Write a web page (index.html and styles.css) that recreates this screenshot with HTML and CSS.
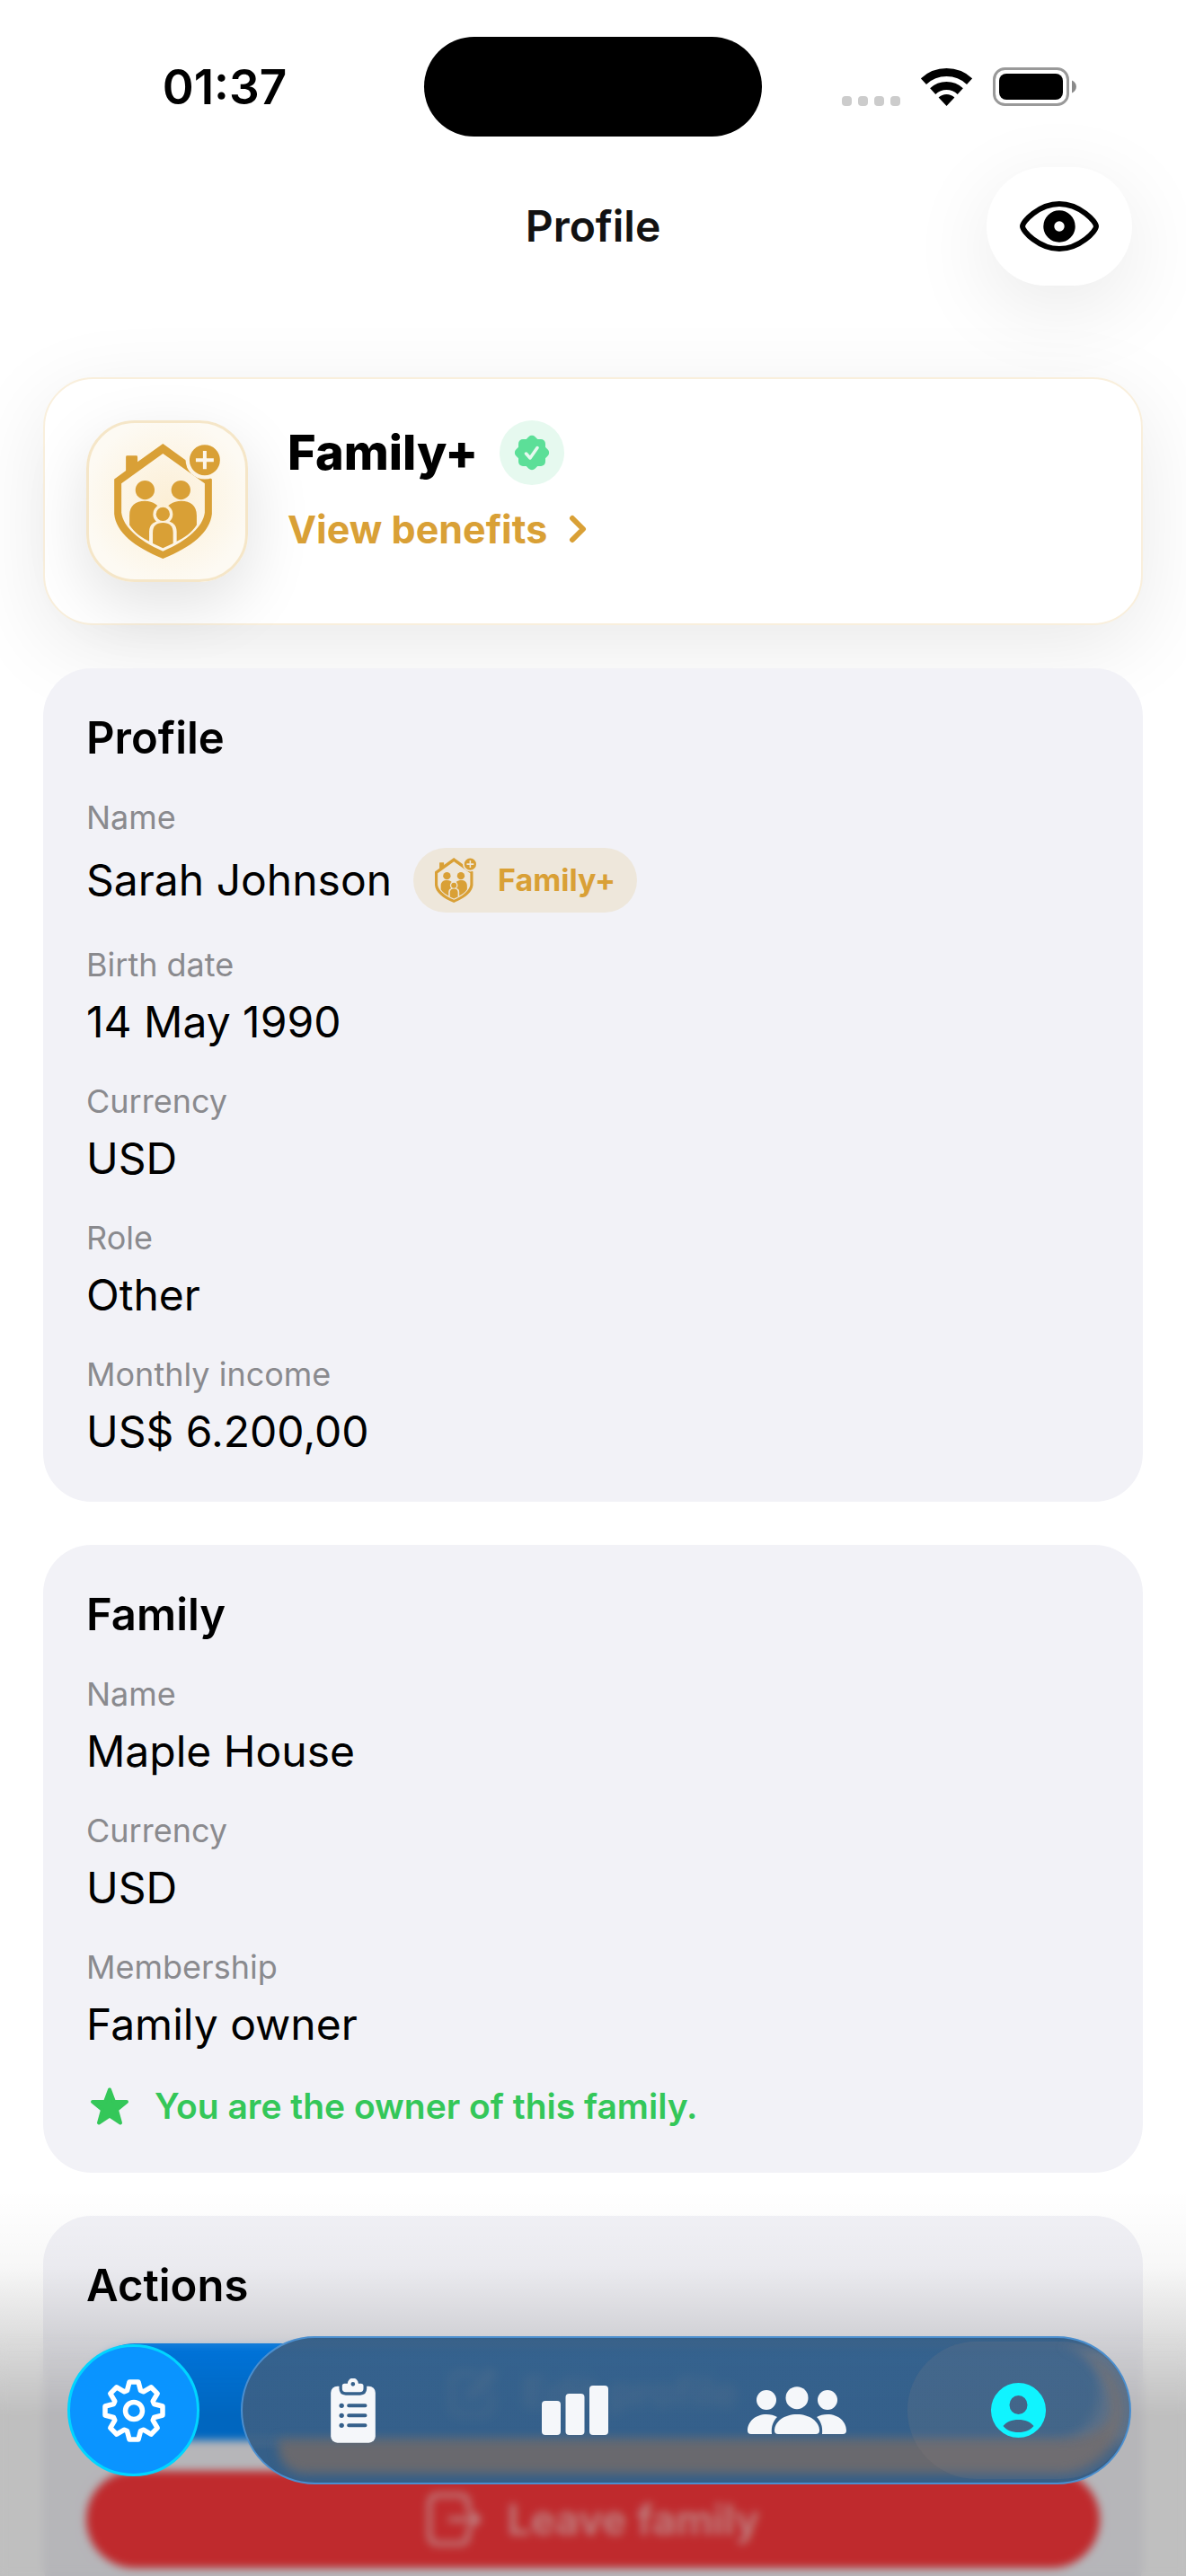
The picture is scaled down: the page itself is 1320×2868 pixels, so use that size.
FILE: index.html
```html
<!DOCTYPE html>
<html lang="en">
<head>
<meta charset="utf-8">
<meta name="viewport" content="width=device-width, initial-scale=1">
<title>Profile</title>
<link rel="stylesheet" href="styles.css">
</head>
<body>
<svg class="sprite" aria-hidden="true">
  <defs>
    <mask id="plus-gap" maskUnits="userSpaceOnUse" x="100" y="100" width="450" height="450">
      <rect x="100" y="100" width="450" height="450" fill="#fff"/>
      <circle cx="447" cy="186" r="64" fill="#000"/>
    </mask>
    <mask id="child-gap" maskUnits="userSpaceOnUse" x="100" y="100" width="450" height="450">
      <rect x="100" y="100" width="450" height="450" fill="#fff"/>
      <circle cx="307" cy="367" r="33" fill="#000"/>
      <path d="M261 520V425C261 400 280 388 307 388S353 400 353 425V520Z" fill="#000"/>
    </mask>
    <symbol id="family-plus" viewBox="144 131 354 385">
      <g fill="currentColor">
        <path mask="url(#plus-gap)" fill-rule="evenodd" d="M307 131L471 250V366C464 428 404 476 307 516C211 476 150 428 144 366V250L183 221V175Q183 171 187 171H218Q222 171 222 175V192ZM307 164L168 264V362C174 408 222 454 307 491C393 454 441 408 447 362V264Z"/>
        <g mask="url(#child-gap)">
          <path d="M195 403V372C195 338 216 323 246 323C276 323 292 338 307 362C322 338 338 323 369 323C399 323 420 338 420 372V403C404 428 380 446 345 462H270C235 446 211 428 195 403Z"/>
        </g>
        <circle cx="247" cy="286" r="32"/>
        <circle cx="367" cy="286" r="32"/>
        <circle cx="307" cy="367" r="23"/>
        <path d="M273 465V430C273 407 285 396 307 396S341 407 341 430V465L307 481Z"/>
        <path fill-rule="evenodd" d="M447 135A51 51 0 1 1 447 237A51 51 0 1 1 447 135ZM441 155V180H417V192H441V216H453V192H477V180H453V155Z"/>
      </g>
    </symbol>
  </defs>
</svg>

<div class="screen">
  <div class="status-bar">
    <div class="status-time">01:37</div>
    <div class="island"></div>
    <div class="status-icons">
      <span class="signal"><i></i><i></i><i></i><i></i></span>
      <svg width="57" height="42" viewBox="0 0 57 42" fill="none" stroke="#000" stroke-width="9" aria-label="Wi-Fi">
        <path d="M2.9 14.6A37.5 37.5 0 0 1 54.1 14.6"/>
        <path d="M13.2 25.6A22.5 22.5 0 0 1 43.8 25.6"/>
        <path d="M28.5 42L19.6 32.5A13 13 0 0 1 37.4 32.5Z" fill="#000" stroke="none"/>
      </svg>
      <svg width="93" height="43" viewBox="0 0 93 43" aria-label="Battery">
        <rect x="1.5" y="1.5" width="82" height="40" rx="12" fill="none" stroke="#999" stroke-width="3"/>
        <rect x="7" y="7" width="71" height="29" rx="8"/>
        <path d="M88 14.500C94.500 17 94.500 26 88 28.500Z" fill="#8a8a8a"/>
      </svg>
    </div>
  </div>

  <header class="header">
    <h1 class="header-title">Profile</h1>
    <button class="eye-button" type="button" aria-label="Hide values">
      <svg width="88" height="56" viewBox="0 0 88 56" fill="none" stroke="#000">
        <path d="M3 28C3 23 21 3 44 3S85 23 85 28S67 53 44 53S3 33 3 28Z" stroke-width="6"/>
        <circle cx="44" cy="28" r="11.700" stroke-width="12"/>
      </svg>
    </button>
  </header>

  <main class="content">
    <section class="plan">
      <div class="plan-tile"><svg width="118" height="128"><use href="#family-plus"/></svg></div>
      <div class="plan-text">
        <div class="plan-title">
          <h2>Family+</h2>
          <span class="verified">
            <svg width="42" height="42" viewBox="0 0 42 42" aria-label="Active">
              <g fill="#5cdf98"><rect x="6" y="6" width="30" height="30" rx="5"/><rect x="6" y="6" width="30" height="30" rx="5" transform="rotate(45 21 21)"/></g>
              <path d="M14.500 22L19 27L27 15.500" fill="none" stroke="#e6f9ef" stroke-width="3.500" stroke-linecap="round" stroke-linejoin="round"/>
            </svg>
          </span>
        </div>
        <a class="plan-link" href="#benefits">View benefits
          <svg width="20" height="32" viewBox="0 0 20 32" fill="none" stroke="currentColor" stroke-width="6" stroke-linecap="round" stroke-linejoin="round"><path d="M4 4L16 16L4 28"/></svg>
        </a>
      </div>
    </section>

    <section class="card">
      <h2 class="card-title">Profile</h2>
      <dl class="fields">
        <div class="field"><dt>Name</dt><dd class="name-row">Sarah Johnson
          <span class="pill"><svg width="46" height="50"><use href="#family-plus"/></svg>Family+</span></dd></div>
        <div class="field"><dt>Birth date</dt><dd>14 May 1990</dd></div>
        <div class="field"><dt>Currency</dt><dd>USD</dd></div>
        <div class="field"><dt>Role</dt><dd>Other</dd></div>
        <div class="field"><dt>Monthly income</dt><dd>US$ 6.200,00</dd></div>
      </dl>
    </section>

    <section class="card">
      <h2 class="card-title">Family</h2>
      <dl class="fields">
        <div class="field"><dt>Name</dt><dd>Maple House</dd></div>
        <div class="field"><dt>Currency</dt><dd>USD</dd></div>
        <div class="field"><dt>Membership</dt><dd>Family owner</dd></div>
      </dl>
      <p class="owner-note">
        <svg width="52" height="44" viewBox="0 0 52 44" fill="currentColor" stroke="currentColor" stroke-width="4" stroke-linejoin="round"><path d="M26 3.500L31 17H45L34 26L38 40.500L26 32.500L14 40.500L18 26L7 17H21Z"/></svg>
        You are the owner of this family.
      </p>
    </section>

    <section class="card">
      <h2 class="card-title">Actions</h2>
      <div class="actions">
        <button class="action action-edit" type="button">
          <svg width="54" height="60" viewBox="0 0 54 60" fill="none" stroke="currentColor" stroke-width="5" stroke-linecap="round" stroke-linejoin="round"><path d="M30 9H13Q4 9 4 18V46Q4 55 13 55H39Q48 55 48 46V30M22 37L25 29L46 6L51 11L30 34Z"/></svg>
          Edit profile
        </button>
        <button class="action action-leave" type="button">
          <svg width="62" height="60" viewBox="0 0 62 60" fill="none" stroke="currentColor" stroke-width="5" stroke-linecap="round" stroke-linejoin="round"><path d="M46 18V13Q46 3 36 3H13Q3 3 3 13V47Q3 57 13 57H36Q46 57 46 47V42M26 30H56M49 22L58 30L49 38"/></svg>
          Leave family
        </button>
      </div>
    </section>
  </main>

  <div class="fade"></div>
  <div class="haze"></div>

  <div class="dock">
    <button class="settings" type="button" aria-label="Settings">
      <svg width="70" height="70" viewBox="-35 -35 70 70" fill="none" stroke="#fff" stroke-width="5.500" stroke-linejoin="round">
        <path d="M-7.500-22.500L-5-32H5L7.500-22.500L10.600-21.200L19.100-26.200L26.200-19.100L21.200-10.600L22.500-7.500L32-5V5L22.500 7.500L21.200 10.600L26.200 19.100L19.100 26.200L10.600 21.200L7.500 22.500L5 32H-5L-7.500 22.500L-10.600 21.200L-19.100 26.200L-26.200 19.100L-21.200 10.600L-22.500 7.500L-32 5V-5L-22.500-7.500L-21.200-10.600L-26.200-19.100L-19.100-26.200L-10.600-21.200Z"/>
        <circle r="9.500"/>
      </svg>
    </button>
    <nav class="tabs" aria-label="Main">
      <a class="tab" href="#list" aria-label="List">
        <svg width="50" height="72" viewBox="977 212 149 216">
          <mask id="clip-gap" maskUnits="userSpaceOnUse" x="970" y="200" width="170" height="240">
            <rect x="970" y="200" width="170" height="240" fill="#fff"/>
            <path d="M1005 220H1097V246Q1097 268 1075 268H1027Q1005 268 1005 246Z"/>
            <circle cx="1013" cy="303" r="8"/><circle cx="1013" cy="336" r="8"/><circle cx="1013" cy="369" r="8"/>
            <path d="M1037 303H1092M1037 336H1092M1037 369H1092" stroke="#000" stroke-width="12" stroke-linecap="round"/>
          </mask>
          <rect x="977" y="238" width="149" height="189" rx="22" fill="currentColor" mask="url(#clip-gap)"/>
          <path fill="currentColor" fill-rule="evenodd" d="M1033 229A18 18 0 0 1 1069 229H1078Q1086 229 1086 237V246Q1086 258 1074 258H1027Q1015 258 1015 246V237Q1015 229 1023 229ZM1051 224A7 7 0 1 0 1051 238A7 7 0 1 0 1051 224Z"/>
        </svg>
      </a>
      <a class="tab" href="#stats" aria-label="Statistics">
        <svg width="74" height="56" viewBox="0 0 74 56" fill="currentColor"><rect y="17" width="21" height="38" rx="4"/><rect x="26.500" y="9" width="21" height="46" rx="4"/><rect x="53" width="21" height="55" rx="4"/></svg>
      </a>
      <a class="tab" href="#family" aria-label="Family">
        <svg width="110" height="53" viewBox="0 0 110 53" fill="currentColor">
          <circle cx="21" cy="15" r="11"/><circle cx="55" cy="12.700" r="12.500"/><circle cx="89" cy="15" r="11"/>
          <path d="M34 53Q30 53 30 49C30 39 41 31 55 31S80 39 80 49Q80 53 76 53Z"/>
          <path d="M4 53Q0 53 0 49C0 39 9 31 21 31Q28 31 33 34C29 38 26 44 27 53Z"/>
          <path d="M106 53Q110 53 110 49C110 39 101 31 89 31Q82 31 77 34C81 38 84 44 83 53Z"/>
        </svg>
      </a>
      <a class="tab tab-active" href="#profile" aria-label="Profile" aria-current="page">
        <svg width="61" height="61" viewBox="0 0 61 61"><path fill="currentColor" fill-rule="evenodd" d="M30.500 0A30.500 30.500 0 1 1 30.500 61A30.500 30.500 0 1 1 30.500 0ZM30.500 14A10 10.500 0 1 0 30.500 35A10 10.500 0 1 0 30.500 14ZM13.500 48C17 43.500 23 41 30.500 41S44 43.500 47.500 48C44 52.500 38 55 30.500 55S17 52.500 13.500 48Z"/></svg>
      </a>
    </nav>
  </div>
</div>
</body>
</html>
```
FILE: styles.css
```css
* { box-sizing: border-box; }

body {
  margin: 0;
  background: #fff;
  color: #000;
  font-family: Inter, "Liberation Sans", sans-serif;
}

h1, h2, p, dl, dt, dd { margin: 0; }
button { border: 0; padding: 0; font: inherit; }
svg { display: block; flex: none; }
.sprite { position: absolute; width: 0; height: 0; }

.screen {
  position: relative;
  display: flex;
  flex-direction: column;
  height: 100vh;
  overflow: hidden;
}

/* Status bar */
.status-bar {
  display: grid;
  grid-template-columns: 1fr auto 1fr;
  align-items: center;
  padding-top: 41px;
}
.status-time {
  padding-left: 28px;
  text-align: center;
  font-size: 53px;
  line-height: 60px;
  font-weight: 600;
}
.island { width: 376px; height: 111px; border-radius: 56px; background: #000; }
.status-icons {
  display: flex;
  justify-content: center;
  align-items: flex-end;
  gap: 23px;
  padding-right: 34px;
}
.signal { display: flex; gap: 7px; }
.signal i { width: 11px; height: 11px; border-radius: 4px; background: #ccc; }

/* Header */
.header {
  display: grid;
  grid-template-columns: 1fr auto 1fr;
  align-items: center;
  padding: 34px 60px 0;
}
.header-title { grid-column: 2; font-size: 48px; line-height: 60px; font-weight: 600; color: #111; }
.eye-button {
  justify-self: end;
  display: grid;
  place-items: center;
  width: 162px;
  height: 132px;
  border-radius: 66px;
  background: #fff;
  box-shadow: 0 24px 96px rgba(0, 0, 0, .09);
}

/* Scrolling content */
.content {
  flex: 1;
  min-height: 0;
  display: flex;
  flex-direction: column;
  gap: 48px;
  padding: 102px 48px 0;
  overflow-y: auto;
  scrollbar-width: none;
}

.plan {
  flex: none;
  display: flex;
  gap: 44px;
  padding: 46px;
  border: 2px solid #f9efdc;
  border-radius: 56px;
  background: #fff;
  box-shadow: 0 24px 96px rgba(0, 0, 0, .09);
}
.plan-tile {
  display: grid;
  place-items: center;
  width: 180px;
  height: 180px;
  border: 3px solid #f5e6c8;
  border-radius: 54px;
  background: radial-gradient(circle, #fcefd6, #fdfaf3 75%);
  box-shadow: 0 24px 72px rgba(0, 0, 0, .12);
  color: #d9a036;
}
.plan-text { display: flex; flex-direction: column; align-items: flex-start; gap: 24px; }
.plan-title { display: flex; align-items: center; gap: 24px; }
.plan-title h2 { font-size: 54px; line-height: 60px; font-weight: 800; }
.verified {
  display: grid;
  place-items: center;
  width: 72px;
  height: 72px;
  border-radius: 50%;
  background: #e6f9ef;
}
.plan-link {
  display: flex;
  align-items: center;
  gap: 24px;
  font-size: 43px;
  line-height: 50px;
  font-weight: 700;
  color: #d9a036;
  text-decoration: none;
}

.card {
  position: relative;
  flex: none;
  display: flex;
  flex-direction: column;
  gap: 34px;
  padding: 48px;
  border-radius: 54px;
  background: #f2f2f7;
}
.card-title { font-size: 49px; line-height: 60px; font-weight: 600; }
.fields { display: flex; flex-direction: column; gap: 34px; }
.field { display: flex; flex-direction: column; gap: 12px; }
.field dt { font-size: 36px; line-height: 48px; margin-bottom: -2px; color: #8a8a8e; }
.field dd { font-size: 48px; line-height: 60px; }
.field .name-row { display: flex; align-items: center; gap: 24px; }
.pill {
  display: flex;
  align-items: center;
  gap: 24px;
  height: 72px;
  padding: 0 24px;
  border-radius: 36px;
  background: #eee7db;
  color: #d9a036;
  font-size: 34px;
  font-weight: 700;
}
.owner-note {
  display: flex;
  align-items: center;
  gap: 24px;
  font-size: 39px;
  line-height: 53px;
  font-weight: 600;
  color: #34c759;
}

.actions { display: flex; flex-direction: column; gap: 34px; }
.action {
  display: flex;
  align-items: center;
  justify-content: center;
  gap: 28px;
  height: 108px;
  border-radius: 54px;
  color: rgba(255, 255, 255, .6);
  font-size: 46px;
  font-weight: 600;
}
.action-edit { background: #08f; }
.action-leave { background: #ff383c; }

/* Dimming and blur behind the dock */
.fade, .haze { position: absolute; left: 0; right: 0; bottom: 0; pointer-events: none; }
.fade {
  height: 430px;
  background: linear-gradient(rgba(0, 0, 0, 0), rgba(0, 0, 0, .03) 20%, rgba(0, 0, 0, .12) 36%, rgba(0, 0, 0, .25) 58%, rgba(0, 0, 0, .25));
}
.haze {
  height: 270px;
  backdrop-filter: blur(5px);
  mask-image: linear-gradient(transparent, #000 60px);
}

/* Dock */
.dock {
  position: absolute;
  left: 75px;
  right: 61px;
  bottom: 102px;
  display: flex;
  align-items: center;
  gap: 46px;
}
.settings {
  flex: none;
  display: grid;
  place-items: center;
  width: 147px;
  height: 147px;
  border: 3px solid #00d5ff;
  border-radius: 50%;
  background: #0a94ff;
}
.tabs {
  position: relative;
  flex: 1;
  display: grid;
  grid-template-columns: repeat(4, 1fr);
  height: 165px;
  padding: 4px 0;
  border: 2px solid #4b8fcf;
  border-radius: 83px;
  overflow: hidden;
  background: linear-gradient(#355f88, rgba(62, 95, 129, .85) 20px, rgba(62, 95, 129, .85) 108px, #355f88 125px);
  backdrop-filter: blur(5px);
}
.tabs::before {
  content: "";
  position: absolute;
  inset: 10px 8px 10px 40px;
  border: 0 solid transparent;
  border-right: 12px solid #6d6d70;
  border-bottom: 38px solid #69696e;
  border-radius: 74px 74px 74px 30px;
  filter: blur(6px);
}
.tab {
  position: relative;
  display: grid;
  place-items: center;
  border-radius: 78px;
  color: #f5f7fa;
}
.tab-active { background: rgba(140, 130, 130, .16); color: #10f4ff; }
```
